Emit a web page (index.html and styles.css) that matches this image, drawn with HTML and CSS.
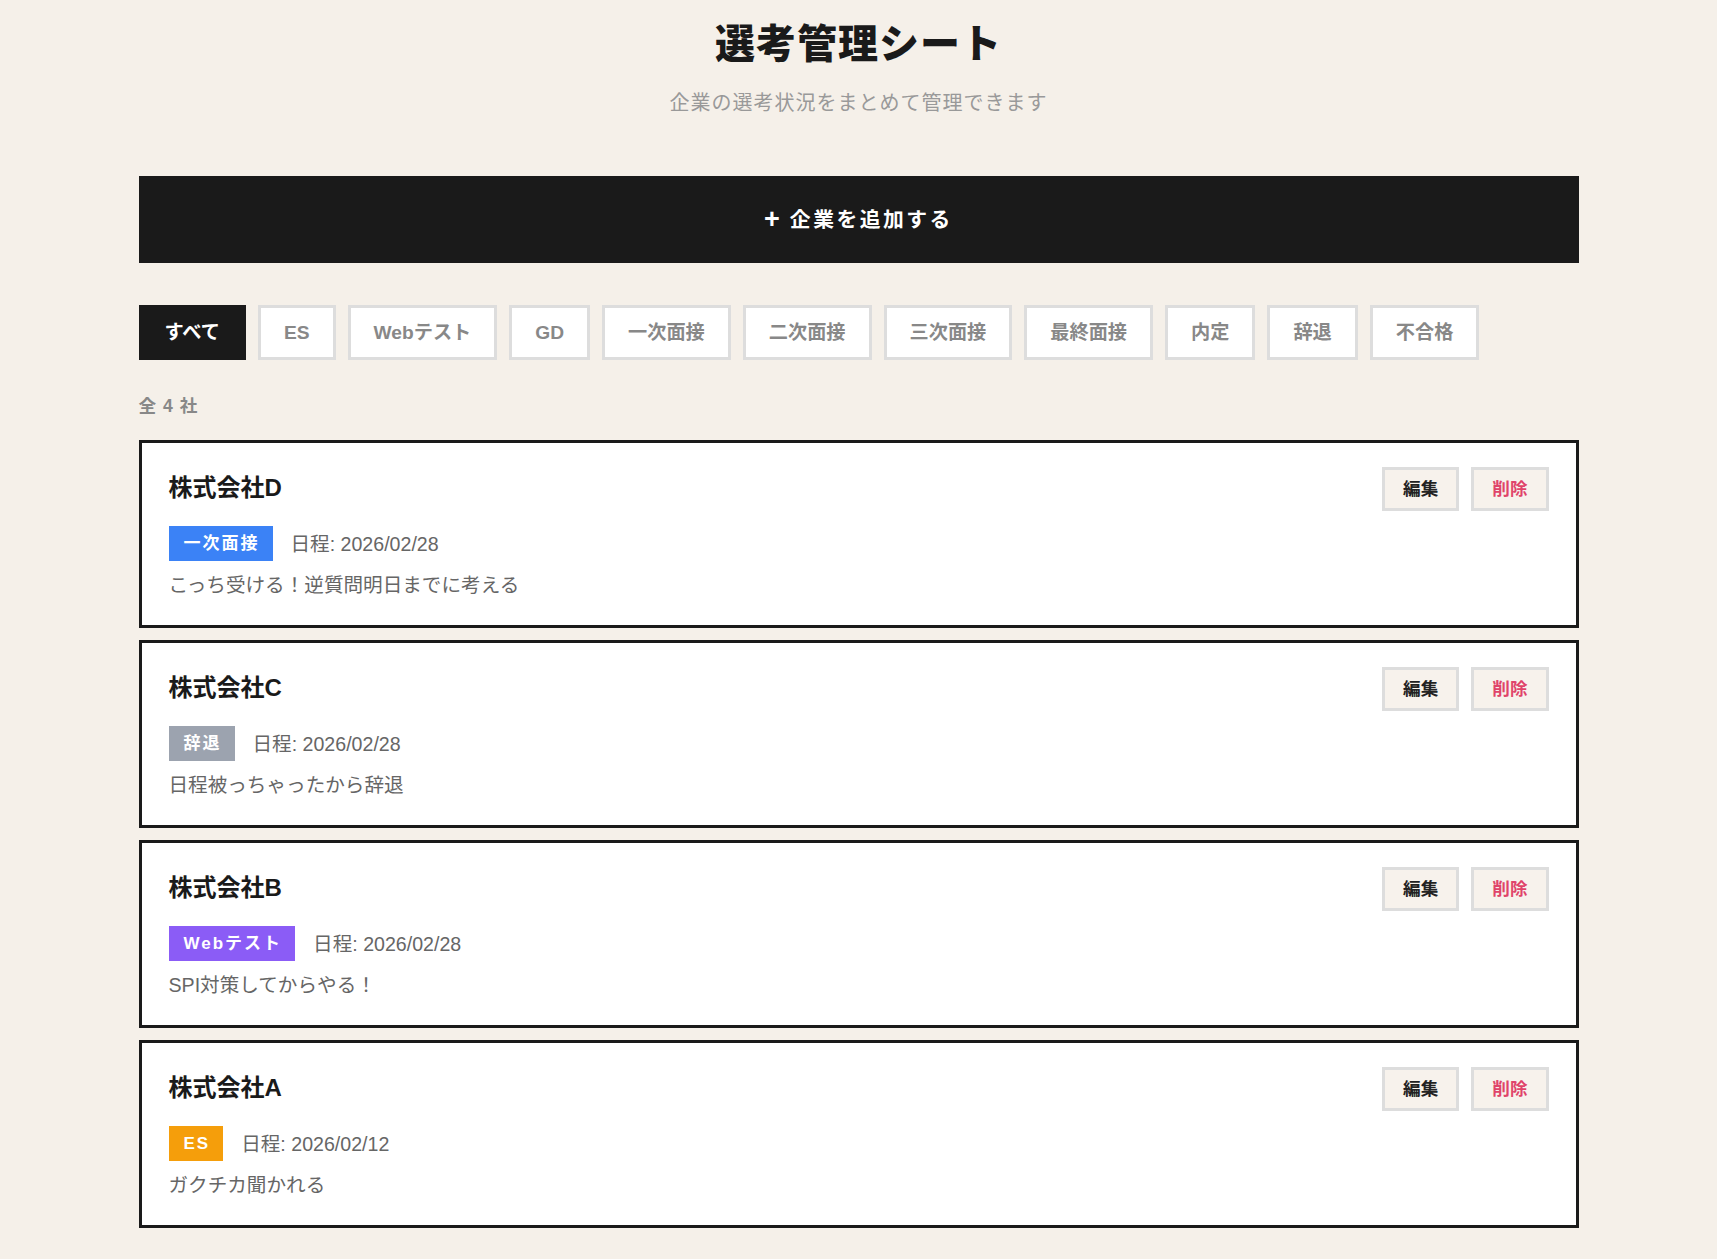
FILE: index.html
```html
<!DOCTYPE html>
<html lang="ja">

<head>
   <meta charset="UTF-8">
   <meta name="viewport" content="width=device-width, initial-scale=1.0">
   <title>選考管理シート</title>
   <link rel="stylesheet" href="styles.css">
</head>

<body>
   <div class="app">
      <header class="header">
         <h1>選考管理シート</h1>
         <p class="subtitle">企業の選考状況をまとめて管理できます</p>
      </header>

      <button class="add-btn"><span class="plus">+</span>企業を追加する</button>

      <div class="filters">
         <button class="filter active">すべて</button>
         <button class="filter">ES</button>
         <button class="filter">Webテスト</button>
         <button class="filter">GD</button>
         <button class="filter">一次面接</button>
         <button class="filter">二次面接</button>
         <button class="filter">三次面接</button>
         <button class="filter">最終面接</button>
         <button class="filter">内定</button>
         <button class="filter">辞退</button>
         <button class="filter">不合格</button>
      </div>

      <p class="count">全 4 社</p>

      <div class="company-list">
         <div class="company">
            <div class="company-head">
               <h2 class="company-name">株式会社D</h2>
               <div class="actions">
                  <button class="action-btn">編集</button>
                  <button class="action-btn delete">削除</button>
               </div>
            </div>
            <div class="meta">
               <span class="badge interview">一次面接</span>
               <span class="date">日程: 2026/02/28</span>
            </div>
            <p class="memo">こっち受ける！逆質問明日までに考える</p>
         </div>

         <div class="company">
            <div class="company-head">
               <h2 class="company-name">株式会社C</h2>
               <div class="actions">
                  <button class="action-btn">編集</button>
                  <button class="action-btn delete">削除</button>
               </div>
            </div>
            <div class="meta">
               <span class="badge declined">辞退</span>
               <span class="date">日程: 2026/02/28</span>
            </div>
            <p class="memo">日程被っちゃったから辞退</p>
         </div>

         <div class="company">
            <div class="company-head">
               <h2 class="company-name">株式会社B</h2>
               <div class="actions">
                  <button class="action-btn">編集</button>
                  <button class="action-btn delete">削除</button>
               </div>
            </div>
            <div class="meta">
               <span class="badge webtest">Webテスト</span>
               <span class="date">日程: 2026/02/28</span>
            </div>
            <p class="memo">SPI対策してからやる！</p>
         </div>

         <div class="company">
            <div class="company-head">
               <h2 class="company-name">株式会社A</h2>
               <div class="actions">
                  <button class="action-btn">編集</button>
                  <button class="action-btn delete">削除</button>
               </div>
            </div>
            <div class="meta">
               <span class="badge es">ES</span>
               <span class="date">日程: 2026/02/12</span>
            </div>
            <p class="memo">ガクチカ聞かれる</p>
         </div>
      </div>
   </div>
</body>

</html>
```

FILE: styles.css
```css
* {
   margin: 0;
   padding: 0;
   box-sizing: border-box;
   font-family: "Liberation Sans", "Noto Sans CJK JP", sans-serif;
}

body {
   background-color: #f5f0e9;
   color: #1a1a1a;
}

.app {
   max-width: 1440px;
   margin: 0 auto;
   padding: 20px 0 31px;
}

.header {
   text-align: center;
}

h1 {
   font-size: 40px;
   line-height: 48px;
   font-weight: 900;
   letter-spacing: 1px;
}

.subtitle {
   margin-top: 20px;
   font-size: 20px;
   line-height: 30px;
   letter-spacing: 1px;
   color: #999;
}

.add-btn {
   display: flex;
   justify-content: center;
   align-items: center;
   width: 100%;
   margin-top: 58px;
   padding: 28px;
   border: none;
   background-color: #1a1a1a;
   color: white;
   font-size: 20.8px;
   line-height: 31px;
   font-weight: bold;
   letter-spacing: 2.5px;
   cursor: pointer;
}

.plus {
   font-size: 27px;
   line-height: 31px;
   margin-right: 10px;
   letter-spacing: 0;
}

.filters {
   display: flex;
   gap: 12px;
   margin-top: 42px;
}

.filter {
   padding: 11px 23px;
   border: 3px solid #ddd;
   background-color: white;
   color: #888;
   font-size: 19.2px;
   line-height: 27px;
   font-weight: bold;
   cursor: pointer;
}

.filter.active {
   background-color: #1a1a1a;
   border-color: #1a1a1a;
   color: white;
}

.count {
   margin-top: 33px;
   font-size: 17.6px;
   line-height: 26px;
   font-weight: bold;
   letter-spacing: 1px;
   color: #888;
}

.company-list {
   display: flex;
   flex-direction: column;
   gap: 12px;
   margin-top: 21px;
}

.company {
   border: 3px solid #1a1a1a;
   background-color: white;
   padding: 24px 27px;
}

.company-head {
   display: flex;
   justify-content: space-between;
   align-items: center;
}

.company-name {
   font-size: 24px;
   line-height: 32px;
   font-weight: bold;
   margin-top: -3px;
}

.actions {
   display: flex;
   gap: 12px;
}

.action-btn {
   padding: 8px 18px;
   border: 3px solid #ddd;
   background-color: #f7f2ec;
   color: #222;
   font-size: 17.6px;
   line-height: 22px;
   font-weight: bold;
   cursor: pointer;
}

.action-btn.delete {
   color: #e0446a;
}

.meta {
   display: flex;
   align-items: center;
   gap: 18px;
   margin-top: 15px;
}

.badge {
   padding: 8px 13px 8px 15px;
   color: white;
   font-size: 17px;
   line-height: 19px;
   font-weight: bold;
   letter-spacing: 2px;
}

.badge.interview {
   background-color: #3b82f6;
}

.badge.declined {
   background-color: #9ca3af;
}

.badge.webtest {
   background-color: #8b5cf6;
}

.badge.es {
   background-color: #f59e0b;
}

.date {
   font-size: 19.6px;
   color: #666;
   margin-top: -3px;
}

.memo {
   margin-top: 9px;
   font-size: 19.6px;
   line-height: 31px;
   color: #666;
}
```
